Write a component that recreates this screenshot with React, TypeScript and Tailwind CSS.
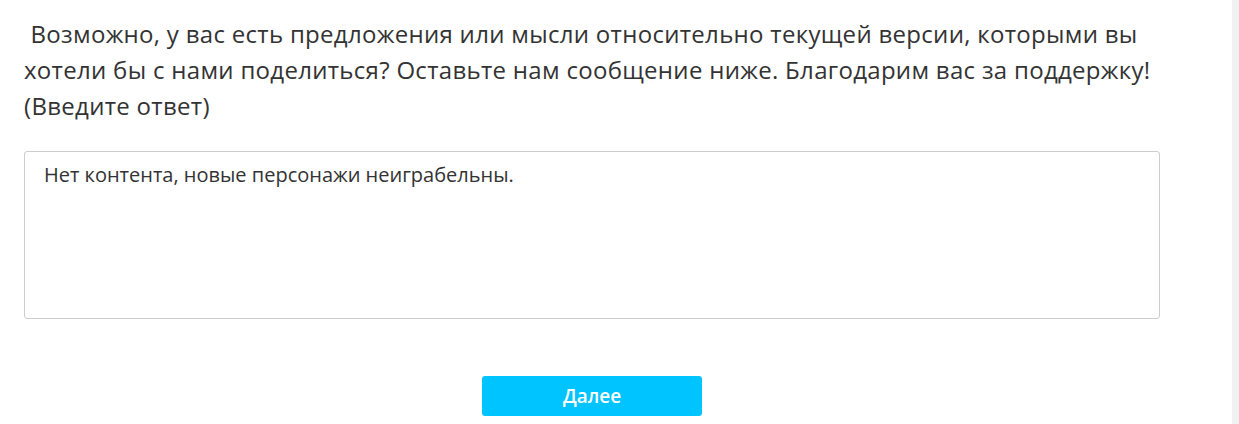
export default function App() {
  return (
    <div className="flex h-[424px] w-full bg-white text-[#333]" style={{ fontFamily: '"Open Sans", "Noto Sans", sans-serif' }}>
      <div className="flex-1 pl-6 pt-[16px]">
        <div className="w-[1136px]">
          {/* Question */}
          <p className="text-[24px] leading-9 tracking-[0.3px] whitespace-nowrap">
            {"\u00a0"}Возможно, у вас есть предложения или мысли относительно текущей версии, которыми вы
            <br />
            хотели бы с нами поделиться? Оставьте нам сообщение ниже. Благодарим вас за поддержку!
            <br />
            (Введите ответ)
          </p>

          {/* Answer */}
          <textarea
            readOnly
            defaultValue="Нет контента, новые персонажи неиграбельны."
            className="mt-[27px] block h-[168px] w-full resize-none rounded-[3px] border border-[#ccc] px-[19px] pt-[9px] text-[20px] leading-7 text-[#333] outline-none"
            style={{ fontFamily: '"Open Sans", "Noto Sans", sans-serif' }}
          />

          <div className="mt-[57px] flex justify-center">
            <button className="h-10 w-[220px] rounded-[3px] bg-[#00c4ff] text-[19px] font-semibold text-white">
              Далее
            </button>
          </div>
        </div>
      </div>
      <div className="w-[7px] bg-[#f1f1f1]" />
    </div>
  );
}
